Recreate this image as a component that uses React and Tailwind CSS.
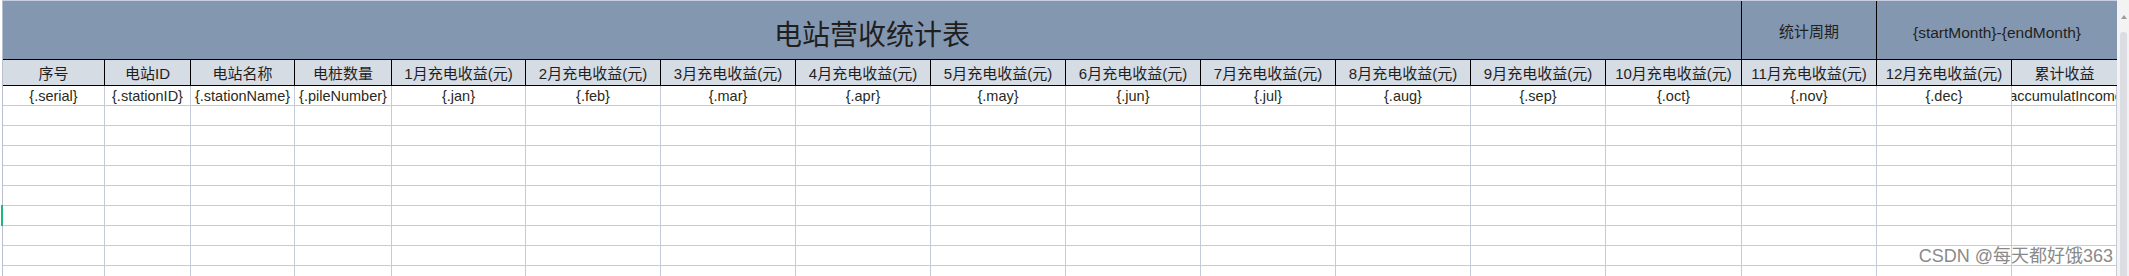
import React from 'react';

// column widths include the right border line
const columns = [
  { w: 'w-[102px]', head: '序号', field: '{.serial}' },
  { w: 'w-[86px]', head: '电站ID', field: '{.stationID}' },
  { w: 'w-[104px]', head: '电站名称', field: '{.stationName}' },
  { w: 'w-[97px]', head: '电桩数量', field: '{.pileNumber}' },
  { w: 'w-[134px]', head: '1月充电收益(元)', field: '{.jan}' },
  { w: 'w-[135px]', head: '2月充电收益(元)', field: '{.feb}' },
  { w: 'w-[135px]', head: '3月充电收益(元)', field: '{.mar}' },
  { w: 'w-[135px]', head: '4月充电收益(元)', field: '{.apr}' },
  { w: 'w-[135px]', head: '5月充电收益(元)', field: '{.may}' },
  { w: 'w-[135px]', head: '6月充电收益(元)', field: '{.jun}' },
  { w: 'w-[135px]', head: '7月充电收益(元)', field: '{.jul}' },
  { w: 'w-[135px]', head: '8月充电收益(元)', field: '{.aug}' },
  { w: 'w-[135px]', head: '9月充电收益(元)', field: '{.sep}' },
  { w: 'w-[136px]', head: '10月充电收益(元)', field: '{.oct}' },
  { w: 'w-[135px]', head: '11月充电收益(元)', field: '{.nov}' },
  { w: 'w-[135px]', head: '12月充电收益(元)', field: '{.dec}' },
  { w: 'w-[105px]', head: '累计收益', field: '{.accumulatIncome}' },
];

const emptyRows = Array.from({ length: 9 });

const App = () => {
  return (
    <div className="relative flex h-[276px] w-[2129px] overflow-hidden bg-white font-['Liberation_Sans','Noto_Sans_CJK_SC',sans-serif] text-[#1f1f1f]">
      {/* sheet */}
      <div className="flex pl-[2px]">
        <div className="flex flex-col border-l border-t border-l-[#b9bfd1] border-t-[#c9cee0]">
          {/* title row */}
          <div className="flex h-[59px] shrink-0 bg-[#8497b0]">
            <div className="flex w-[1739px] items-center justify-center border-b border-r border-black pt-[6px] text-[28px] font-['Noto_Sans_CJK_SC',sans-serif]">
              电站营收统计表
            </div>
            <div className="flex w-[135px] items-center justify-center border-b border-r border-black pt-[5px] text-[15px]">
              统计周期
            </div>
            <div className="flex w-[240px] items-center justify-center border-b border-black pt-[5px] text-[15.5px]">
              {'{startMonth}-{endMonth}'}
            </div>
          </div>

          {/* header row */}
          <div className="flex h-[26px] shrink-0 bg-[#d6dce4]">
            {columns.map((col, i) => (
              <div
                key={col.head}
                className={`${col.w} flex shrink-0 items-center justify-center whitespace-nowrap border-b border-black pt-[4px] text-[15px] ${i < columns.length - 1 ? 'border-r' : ''}`}
              >
                {col.head}
              </div>
            ))}
          </div>

          {/* template row */}
          <div className="flex h-[20px] shrink-0">
            {columns.map((col) => (
              <div
                key={col.field}
                className={`${col.w} flex shrink-0 items-end justify-center overflow-hidden whitespace-nowrap border-b border-r border-[#c5cbd9] text-[14.5px] leading-[18px] text-[#2a2a22]`}
              >
                {col.field}
              </div>
            ))}
          </div>

          {/* empty rows */}
          {emptyRows.map((_, r) => (
            <div key={r} className="flex h-[20px] shrink-0">
              {columns.map((col) => (
                <div key={col.head} className={`${col.w} shrink-0 border-b border-r border-[#c5cbd9]`} />
              ))}
            </div>
          ))}
        </div>
      </div>

      {/* vertical scrollbar */}
      <div className="flex w-[12px] shrink-0 flex-col bg-[#f3f3f4] pl-[3px]">
        <div className="flex h-[32px] items-center pl-[1px] pt-[2px]">
          <svg width="6" height="4" viewBox="0 0 6 4">
            <path d="M0 4 L3 0 L6 4 Z" fill="#9b9ba3" />
          </svg>
        </div>
        <div className="w-[7px] flex-1 rounded-t-[3px] bg-[#dcdde3]" />
      </div>

      {/* row selection marker */}
      <div className="absolute left-[1px] top-[205px] h-[21px] w-[2px] bg-[#21b77a]" />

      {/* watermark */}
      <div className="absolute right-[16px] top-[245px] whitespace-nowrap text-[18px] leading-[22px] text-[#8a8a8a] [text-shadow:0_0_1px_#fff,0_0_2px_#fff]">
        CSDN @每天都好饿363
      </div>
    </div>
  );
};

export default App;
